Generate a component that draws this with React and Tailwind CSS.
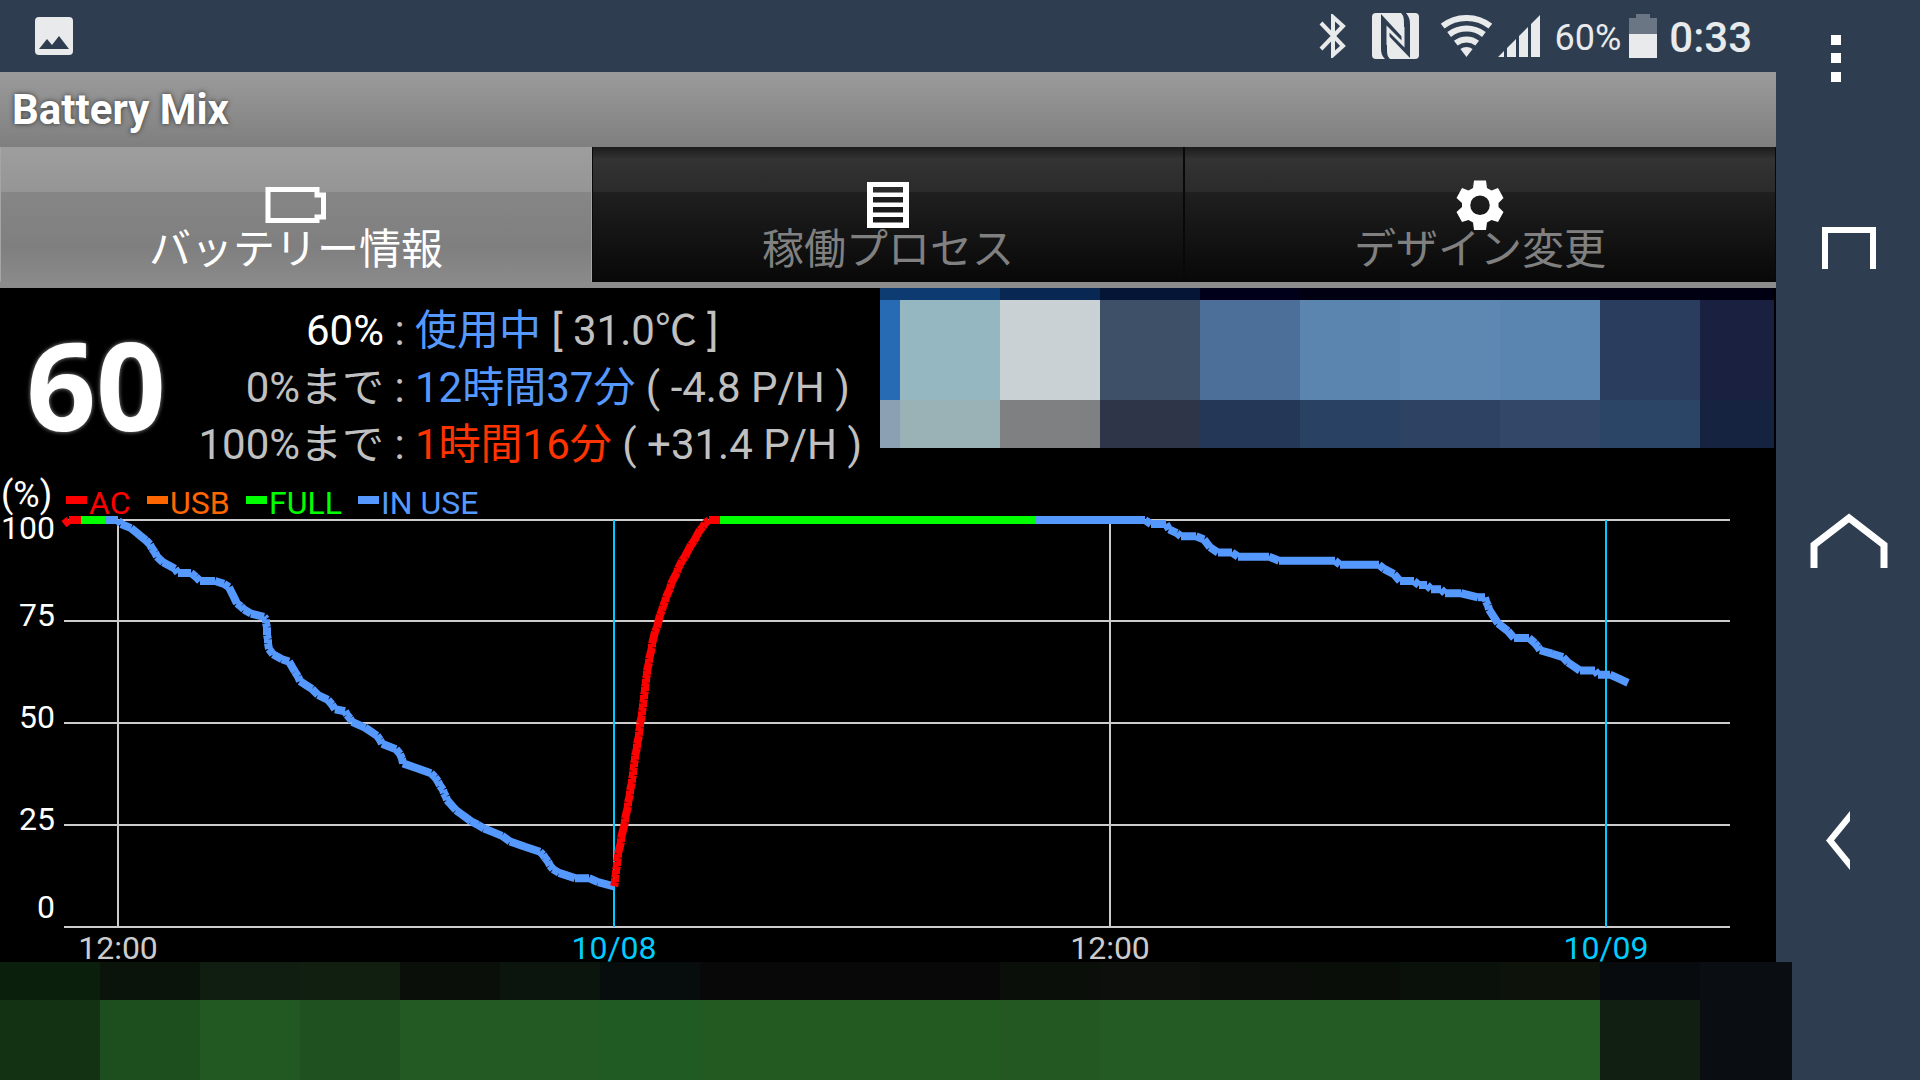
import React, { useState } from "react";

const TABS = [
  { id: "battery", label: "バッテリー情報", icon: <BatteryIcon /> },
  { id: "process", label: "稼働プロセス", icon: <ListIcon /> },
  { id: "design", label: "デザイン変更", icon: <GearIcon /> },
];

const LEGEND = [
  { name: "AC", x: 66, color: "#ff0000" },
  { name: "USB", x: 147, color: "#ff6600" },
  { name: "FULL", x: 246, color: "#00ff00" },
  { name: "IN USE", x: 358, color: "#5599ff" },
];

const Y_LABELS = [
  { text: "100", y: 59 },
  { text: "75", y: 146 },
  { text: "50", y: 248 },
  { text: "25", y: 350 },
  { text: "0", y: 438 },
];

const X_LABELS = [
  { text: "12:00", x: 118, color: "#cccccc" },
  { text: "10/08", x: 614, color: "#00ccff" },
  { text: "12:00", x: 1110, color: "#cccccc" },
  { text: "10/09", x: 1606, color: "#00ccff" },
];

// [x, level %]
const SERIES = [
  { color: "#ff0000", points: [[64, 99], [69, 100], [81, 100]] },
  { color: "#00ff00", points: [[81, 100], [105, 100]] },
  {
    color: "#5599ff",
    points: [
      [105, 100], [118, 100], [121, 99], [131, 98], [141, 96], [150, 94], [157, 91], [163, 89.6],
      [175, 88], [178, 87], [191, 87], [200, 85], [215, 85], [224, 84.3], [229, 83.5], [237, 79.5],
      [244, 78], [251, 77], [264, 76.2], [266, 75.6], [268, 69.7], [269, 68.3], [273, 67],
      [282, 65.8], [289, 65.2], [295, 62.7], [300, 60.4], [312, 58.5], [318, 57], [328, 55.8],
      [335, 53.5], [345, 53], [352, 50.4], [365, 49], [377, 47], [382, 45], [396, 43.7],
      [400, 42.5], [403, 40.2], [417, 39], [431, 37.8], [435, 36.8], [443, 33.7], [447, 31.2],
      [456, 28.7], [471, 26], [484, 24.2], [502, 22.4], [510, 21], [525, 19.7], [540, 18.5],
      [545, 17], [553, 14.2], [559, 13.3], [575, 12], [589, 12], [598, 11], [614, 10],
    ],
  },
  {
    color: "#ff0000",
    points: [
      [614, 10], [618, 18], [624, 24.7], [631, 34.5], [636, 43], [641, 51], [648, 64], [653, 70.5],
      [660, 76.7], [666, 81], [673, 85.3], [680, 89], [687, 92], [698, 96.7], [705, 99.2],
      [709, 100], [720, 100],
    ],
  },
  { color: "#00ff00", points: [[720, 100], [1036, 100]] },
  {
    color: "#5599ff",
    points: [
      [1036, 100], [1145, 100], [1151, 99], [1166, 99], [1169, 97.7], [1177, 96.8], [1181, 96],
      [1196, 96], [1204, 95.2], [1210, 93.3], [1218, 92], [1232, 92], [1238, 91], [1269, 91],
      [1279, 90], [1335, 90], [1340, 89], [1379, 89], [1384, 88], [1394, 86.7], [1400, 85],
      [1414, 85], [1419, 84], [1427, 84], [1431, 83], [1441, 83], [1445, 82], [1461, 82],
      [1478, 81], [1485, 81], [1489, 78], [1498, 74.6], [1508, 72.7], [1514, 71], [1529, 71],
      [1535, 69.7], [1540, 68], [1563, 66.3], [1568, 65], [1580, 63], [1595, 63], [1598, 62],
      [1610, 62], [1628, 60],
    ],
  },
];

const BANNER_TOP = [
  ["bg-[#0d3c73]", "bg-[#266bb3]", "bg-[#8ca0b3]"],
  ["bg-[#0d3a70]", "bg-[#94b7c1]", "bg-[#9ab2b5]"],
  ["bg-[#082752]", "bg-[#c9d1d5]", "bg-[#7f8081]"],
  ["bg-[#041535]", "bg-[#3d5068]", "bg-[#2f3549]"],
  ["bg-[#00001a]", "bg-[#4b6f99]", "bg-[#243757]"],
  ["bg-[#000012]", "bg-[#5b85af]", "bg-[#294263]"],
  ["bg-[#000012]", "bg-[#5e88b1]", "bg-[#2e4363]"],
  ["bg-[#000012]", "bg-[#5a85b0]", "bg-[#334768]"],
  ["bg-[#000012]", "bg-[#2b3d5f]", "bg-[#2b4566]"],
  ["bg-[#000012]", "bg-[#1a2040]", "bg-[#152340]"],
];

const BANNER_BOTTOM = [
  ["bg-[#0b200c]", "bg-[#133113]"],
  ["bg-[#0a140b]", "bg-[#1d4e1d]"],
  ["bg-[#101d11]", "bg-[#225822]"],
  ["bg-[#101f0f]", "bg-[#1f5120]"],
  ["bg-[#0a0f0a]", "bg-[#235923]"],
  ["bg-[#0c150d]", "bg-[#235922]"],
  ["bg-[#070c0c]", "bg-[#215b24]"],
  ["bg-[#080808]", "bg-[#235a22]"],
  ["bg-[#080808]", "bg-[#235a22]"],
  ["bg-[#080808]", "bg-[#235a22]"],
  ["bg-[#0a0f0a]", "bg-[#235822]"],
  ["bg-[#0d0f0d]", "bg-[#245a23]"],
  ["bg-[#0b0d0a]", "bg-[#245a23]"],
  ["bg-[#090e09]", "bg-[#245a23]"],
  ["bg-[#0a110b]", "bg-[#245a23]"],
  ["bg-[#0d120b]", "bg-[#245a23]"],
  ["bg-[#070b0e]", "bg-[#101f12]"],
  ["bg-[#0a0e12]", "bg-[#0a0e12]"],
];

function BatteryIcon() {
  return (
    <svg width="62" height="38" viewBox="0 0 62 38" aria-hidden="true">
      <path d="M3 3.500H52V9H58.500V31H52V34.500H3Z" fill="none" stroke="#fff" strokeWidth="5" />
    </svg>
  );
}

function ListIcon() {
  return (
    <svg width="42" height="46" viewBox="0 0 42 46" aria-hidden="true">
      <path fill="#fff" fillRule="evenodd" d="M0 0H42V46H0ZM6 5V10.500H36V5ZM6 15V20.500H36V15ZM6 25V30.500H36V25ZM6 35V40.500H36V35Z" />
    </svg>
  );
}

function GearIcon() {
  return (
    <svg width="48" height="50" viewBox="0 0 48 50" aria-hidden="true">
      <path
        fill="#fff"
        fillRule="evenodd"
        d="M18 0.500H30L31 8L35.500 10.500L42 8L47.500 18L42.500 23V27L47.500 32L42 42L35.500 40L31 42.500L30 50H18L17 42.500L12.500 40L6 42L0.500 32L6 27V23L0.500 18L6 8L12.500 10.500L17 8ZM24 15.500A9.700 9.700 0 1 0 24 35A9.700 9.700 0 1 0 24 15.500Z"
      />
    </svg>
  );
}

function StatusBar() {
  return (
    <header className="h-18 bg-[#2e3e50] flex items-center justify-between pl-[35px] pr-6 text-[#e8eaec]">
      <svg width="38" height="38" viewBox="0 0 38 38" aria-hidden="true">
        <rect width="38" height="38" rx="4" fill="#e8eaec" />
        <path d="M4 32L12 22L17 28L24 19L34 32Z" fill="#2e3e50" />
      </svg>
      <div className="flex items-center">
        <svg width="27" height="44" viewBox="0 0 27 44" className="mr-[26px]" aria-hidden="true">
          <path d="M2 9L24 32L14 41V3L24 12L2 35" fill="none" stroke="#e8eaec" strokeWidth="4" />
        </svg>
        <svg width="47" height="46" viewBox="0 0 47 46" className="mr-[22px]" aria-hidden="true">
          <rect width="47" height="46" rx="4" fill="#e8eaec" />
          <path d="M13 46C9 42 9 38 9 34V1L32 26V12C32 6 32 3 29 0H34C38 5 38 8 38 13V45L15 21V34C15 40 15 43 18 46Z" fill="#2e3e50" />
          <path d="M16 32V16L31 31V14" fill="none" stroke="#e8eaec" strokeWidth="3" />
        </svg>
        <svg width="51" height="42" viewBox="0 0 51 42" className="mr-[6px]" aria-hidden="true">
          <g fill="none" stroke="#e8eaec" strokeWidth="6">
            <path d="M1.700 11.100A39 39 0 0 1 49.300 11.100" />
            <path d="M8.100 19.500A28.500 28.500 0 0 1 42.900 19.500" />
            <path d="M14.800 28.200A17.500 17.500 0 0 1 36.200 28.200" />
          </g>
          <path d="M19.400 34.100A10 10 0 0 1 31.600 34.100L25.500 42Z" fill="#e8eaec" />
        </svg>
        <svg width="42" height="42" viewBox="0 0 42 42" className="mr-[14px]" aria-hidden="true">
          <path fill="#e8eaec" d="M0 42L6 36V42ZM9 33L18 24V42H9ZM21 21L30 12V42H21ZM33 9L42 0V42H33Z" />
        </svg>
        <span className="pt-1 text-4xl leading-none">60%</span>
        <svg width="28" height="44" viewBox="0 0 28 44" className="ml-2 mr-3" aria-hidden="true">
          <path d="M7 0H21V4H28V20H0V4H7Z" fill="#6a7683" />
          <path d="M0 20H28V44H0Z" fill="#e8eaec" />
        </svg>
        <span className="pt-1 text-[42px] leading-none font-medium">0:33</span>
      </div>
    </header>
  );
}

function Stat({ label, value, rate, labelClass, valueClass }) {
  return (
    <div className="contents">
      <dt className={`text-right ${labelClass}`}>{label}</dt>
      <dd className="whitespace-pre">
        <span>{" : "}</span>
        <span className={valueClass}>{value}</span>
        <span>{` ${rate}`}</span>
      </dd>
    </div>
  );
}

// every step is its own stroke, so the joints stay open;
// steep parts are cut into steps of about one percent
function toPath(points) {
  let d = "";
  points.slice(1).forEach(([x, level], i) => {
    const [px, plevel] = points[i];
    const steps = Math.max(1, Math.round(Math.abs(level - plevel)));
    for (let k = 0; k < steps; k++) {
      const x1 = px + ((x - px) * k) / steps;
      const y1 = 447 - (plevel + ((level - plevel) * k) / steps) * 4.07;
      // whole-pixel x keeps the little kinks of the curve
      const x2 = k === steps - 1 ? x : Math.round(px + ((x - px) * (k + 1)) / steps);
      const y2 = 447 - (plevel + ((level - plevel) * (k + 1)) / steps) * 4.07;
      d += `M${Math.round(x1)} ${y1}L${x2} ${y2}`;
    }
  });
  return d;
}

function BatteryChart() {
  return (
    <svg viewBox="0 0 1776 482" className="block w-full overflow-visible" fontSize="32" role="img" aria-label="Battery history">
      <text x="1" y="27" fontSize="36" fill="#fff">(%)</text>
      {LEGEND.map((l) => (
        <g key={l.name} fill={l.color}>
          <rect x={l.x} y="16" width="21" height="8" />
          <text x={l.x + 23} y="34">{l.name}</text>
        </g>
      ))}
      {Y_LABELS.map((l) => (
        <text key={l.text} x="55" y={l.y} textAnchor="end" fill="#fff">{l.text}</text>
      ))}

      {/* Grid */}
      <path d="M64 40H1730M64 141H1730M64 243H1730M64 345H1730M64 447H1730" stroke="#cccccc" strokeWidth="2" />
      {X_LABELS.map((l) => (
        <g key={l.x}>
          <path d={`M${l.x} 40V447`} stroke={l.color} strokeWidth="2" />
          <text x={l.x} y="479" textAnchor="middle" fill={l.color}>{l.text}</text>
        </g>
      ))}

      {SERIES.map((s, i) => (
        <path key={i} d={toPath(s.points)} stroke={s.color} strokeWidth="8" fill="none" />
      ))}
    </svg>
  );
}

function NavBar() {
  return (
    <nav className="w-36 shrink-0 bg-[#2e3e50] flex flex-col items-center">
      <button type="button" aria-label="Menu" className="mt-[35px] mr-6">
        <svg width="10" height="47" viewBox="0 0 10 47" className="block">
          <path fill="#fff" d="M0 0H10V10H0ZM0 18H10V28H0ZM0 37H10V47H0Z" />
        </svg>
      </button>
      <button type="button" aria-label="Recent apps" className="mt-[145px] ml-[2px]">
        <svg width="54" height="42" viewBox="0 0 54 42" className="block">
          <path d="M3 42V3H51V42" fill="none" stroke="#fff" strokeWidth="6" />
        </svg>
      </button>
      <button type="button" aria-label="Home" className="mt-[244px] ml-[2px]">
        <svg width="78" height="55" viewBox="0 0 78 55" className="block">
          <path d="M4 55V32L39 5L74 32V55" fill="none" stroke="#fff" strokeWidth="7" />
        </svg>
      </button>
      <button type="button" aria-label="Back" className="mt-[243px] mr-5">
        <svg width="24" height="59" viewBox="0 0 24 59" className="block">
          <path d="M24 0V10L8 29.500L24 49V59L0 29.500Z" fill="#fff" />
        </svg>
      </button>
    </nav>
  );
}

export default function App() {
  const [active, setActive] = useState("battery");

  return (
    <div className="min-h-screen flex bg-black font-['Roboto','Noto_Sans_CJK_JP',sans-serif]">
      <main className="flex-1 min-w-0 flex flex-col">
        <StatusBar />

        <div className="h-[75px] flex items-center pl-3 bg-linear-to-b from-[#9b9b9b] to-[#7f7f7f]">
          <h1 className="text-[42px] leading-none font-bold text-white [text-shadow:0_0_5px_#333]">Battery Mix</h1>
        </div>

        {/* Tabs */}
        <div role="tablist" className="h-[141px] grid grid-cols-3 border-b-6 border-[#8c8c8c]">
          {TABS.map((t) => (
            <button
              key={t.id}
              type="button"
              role="tab"
              aria-selected={active === t.id}
              onClick={() => setActive(t.id)}
              className={`flex flex-col items-center pt-[34px] border-x ${
                active === t.id
                  ? "border-[#a5a5a5] text-white bg-[linear-gradient(#9e9e9e,#959595_45px,#868686_45px,#7f7f7f_100px,#8a8a8a)]"
                  : "border-[#080808] text-[#808080] bg-[linear-gradient(#1c1c1c,#333_12px,#2b2b2b_45px,#1f1f1f_45px,#080808)]"
              }`}
            >
              <span className="h-12 flex items-center">{t.icon}</span>
              <span className="text-[42px] leading-[42px]">{t.label}</span>
            </button>
          ))}
        </div>

        {/* Current state */}
        <section className="flex justify-between pr-[2px] h-48">
          <div className="flex">
            <div className="w-[192px] h-48 flex items-center justify-center text-[122px] leading-none font-bold text-white font-['Open_Sans',sans-serif] [text-shadow:0_0_4px_#999]">
              60
            </div>
            <dl className="grid grid-cols-[192px_auto] auto-rows-[57px] content-start pt-[14px] text-[42px] leading-[57px] text-[#c0c0c0] whitespace-nowrap">
              <Stat label="60%" value="使用中" rate="[ 31.0℃ ]" labelClass="text-white" valueClass="text-[#5599ff]" />
              <Stat label="0%まで" value="12時間37分" rate="( -4.8 P/H )" labelClass="" valueClass="text-[#5599ff]" />
              <Stat label="100%まで" value="1時間16分" rate="( +31.4 P/H )" labelClass="" valueClass="text-[#ff3300]" />
            </dl>
          </div>
          <div className="w-[894px] h-40 grid grid-cols-[20fr_100fr_100fr_100fr_100fr_100fr_100fr_100fr_100fr_74fr]">
            {BANNER_TOP.map(([top, mid, low], i) => (
              <div key={i} className="flex flex-col">
                <div className={`h-3 ${top}`} />
                <div className={`h-[100px] ${mid}`} />
                <div className={`h-12 ${low}`} />
              </div>
            ))}
          </div>
        </section>

        <BatteryChart />

        {/* Bottom banner, slightly wider than the app area */}
        <footer className="relative -mr-4 flex-1 grid grid-cols-[repeat(17,100fr)_92fr]">
          {BANNER_BOTTOM.map(([top, low], i) => (
            <div key={i} className="flex flex-col">
              <div className={`h-[38px] ${top}`} />
              <div className={`flex-1 min-h-20 ${low}`} />
            </div>
          ))}
        </footer>
      </main>
      <NavBar />
    </div>
  );
}
